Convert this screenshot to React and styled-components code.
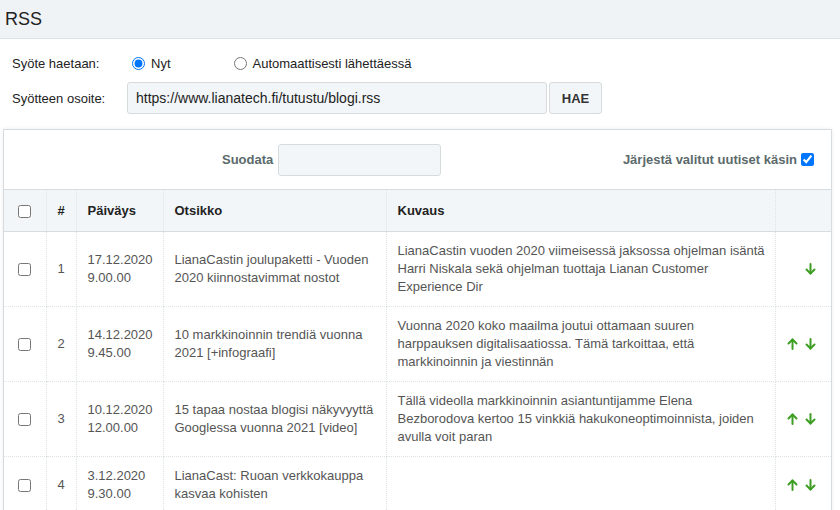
import React, { useState } from "react";
import styled, { createGlobalStyle } from "styled-components";

const GlobalStyle = createGlobalStyle`
  html, body {
    margin: 0;
    padding: 0;
    background: #fff;
    font-family: "Liberation Sans", Arial, sans-serif;
    color: #222;
  }
  * { box-sizing: border-box; }
`;

const items = [
  {
    id: 1,
    date: "17.12.2020",
    time: "9.00.00",
    title: "LianaCastin joulupaketti - Vuoden 2020 kiinnostavimmat nostot",
    desc: "LianaCastin vuoden 2020 viimeisessä jaksossa ohjelman isäntä Harri Niskala sekä ohjelman tuottaja Lianan Customer Experience Dir",
  },
  {
    id: 2,
    date: "14.12.2020",
    time: "9.45.00",
    title: "10 markkinoinnin trendiä vuonna 2021 [+infograafi]",
    desc: "Vuonna 2020 koko maailma joutui ottamaan suuren harppauksen digitalisaatiossa. Tämä tarkoittaa, että markkinoinnin ja viestinnän",
  },
  {
    id: 3,
    date: "10.12.2020",
    time: "12.00.00",
    title: "15 tapaa nostaa blogisi näkyvyyttä Googlessa vuonna 2021 [video]",
    desc: "Tällä videolla markkinoinnin asiantuntijamme Elena Bezborodova kertoo 15 vinkkiä hakukoneoptimoinnista, joiden avulla voit paran",
  },
  {
    id: 4,
    date: "3.12.2020",
    time: "9.30.00",
    title: "LianaCast: Ruoan verkkokauppa kasvaa kohisten",
    desc: "",
  },
];

const Page = styled.div`
  width: 840px;
  height: 510px;
  overflow: hidden;
`;

const TitleBar = styled.header`
  height: 39px;
  background: #f0f3f5;
  border-bottom: 1px solid #dde2e6;
  padding: 0 5px;
  display: flex;
  align-items: center;
  font-size: 18px;
  color: #222;
`;

const Form = styled.div`
  padding: 11px 12px 0;
  display: grid;
  grid-template-columns: 115px 1fr;
  row-gap: 6px;
  align-items: center;
  font-size: 13px;
`;

const Label = styled.div`
  color: #222;
`;

const RadioGroup = styled.div`
  display: flex;
  align-items: center;
  height: 26px;
`;

const RadioLabel = styled.label`
  display: flex;
  align-items: center;
  margin-right: ${(p) => p.$gap || 0}px;
  input {
    margin: 0 6px 0 5px;
    width: 13px;
    height: 13px;
  }
`;

const UrlRow = styled.div`
  display: flex;
  gap: 2px;
`;

const TextInput = styled.input`
  height: 32px;
  width: ${(p) => p.$w}px;
  background: #f3f6f8;
  border: 1px solid #d6dbde;
  border-radius: 3px;
  padding: 0 8px;
  font-family: inherit;
  font-size: 14px;
  color: #222;
  outline: none;
`;

const Button = styled.button`
  height: 32px;
  width: 53px;
  background: #f3f6f8;
  border: 1px solid #d6dbde;
  border-radius: 3px;
  font-family: inherit;
  font-weight: bold;
  font-size: 13px;
  color: #333;
`;

const Panel = styled.section`
  margin: 15px 8px 0 3px;
  border: 1px solid #d6dcdf;
  border-bottom: none;
  box-shadow: 0 0 4px rgba(0, 0, 0, 0.08);
`;

const FilterBar = styled.div`
  height: 59px;
  display: flex;
  align-items: center;
  padding: 0 17px 0 218px;
  font-size: 13px;
  font-weight: bold;
  color: #5b6a6b;
`;

const FilterField = styled.label`
  display: flex;
  align-items: center;
  gap: 5px;
`;

const SortToggle = styled.label`
  margin-left: auto;
  display: flex;
  align-items: center;
  gap: 4px;
  input {
    margin: 0;
    width: 13px;
    height: 13px;
  }
`;

const Table = styled.table`
  width: 100%;
  border-collapse: collapse;
  table-layout: fixed;
  font-size: 13px;
`;

const Th = styled.th`
  background: #f3f6f9;
  text-align: ${(p) => p.$align || "left"};
  font-weight: bold;
  color: #222;
  height: 42px;
  padding: 0 11px;
  border-top: 1px solid #d6dcdf;
  border-bottom: 1px solid #d6dcdf;
  border-right: 1px dotted #dde2e5;
  &:last-child { border-right: none; }
`;

const Td = styled.td`
  color: #555;
  line-height: 18px;
  padding: 10px ${(p) => (p.$tight ? 9 : 11)}px 10px 11px;
  vertical-align: middle;
  text-align: ${(p) => p.$align || "left"};
  border-bottom: 1px dotted #dde2e5;
  border-right: 1px dotted #dde2e5;
  &:last-child { border-right: none; }
`;

const Check = styled.input`
  margin: 0;
  width: 13px;
  height: 13px;
  vertical-align: middle;
`;

const Arrows = styled.div`
  display: flex;
  justify-content: flex-end;
  gap: 5px;
  padding-right: 3px;
`;

const ArrowBtn = styled.span`
  display: inline-flex;
  width: 13px;
  justify-content: center;
  color: #3c9e22;
`;

function Arrow({ up }) {
  return (
    <ArrowBtn>
      <svg width="11" height="12" viewBox="0 0 11 12" fill="none">
        <g
          stroke="currentColor"
          strokeWidth="2"
          strokeLinecap="round"
          strokeLinejoin="round"
          transform={up ? "" : "rotate(180 5.5 6)"}
        >
          <path d="M5.5 11V1.5" />
          <path d="M1.5 5.5l4-4 4 4" />
        </g>
      </svg>
    </ArrowBtn>
  );
}

export default function App() {
  const [mode, setMode] = useState("now");
  const [manual, setManual] = useState(true);

  return (
    <Page>
      <GlobalStyle />
      <TitleBar>RSS</TitleBar>

      <Form>
        <Label>Syöte haetaan:</Label>
        <RadioGroup>
          <RadioLabel $gap={58}>
            <input
              type="radio"
              name="mode"
              checked={mode === "now"}
              onChange={() => setMode("now")}
            />
            Nyt
          </RadioLabel>
          <RadioLabel>
            <input
              type="radio"
              name="mode"
              checked={mode === "auto"}
              onChange={() => setMode("auto")}
            />
            Automaattisesti lähettäessä
          </RadioLabel>
        </RadioGroup>

        <Label>Syötteen osoite:</Label>
        <UrlRow>
          <TextInput $w={420} defaultValue="https://www.lianatech.fi/tutustu/blogi.rss" />
          <Button>HAE</Button>
        </UrlRow>
      </Form>

      <Panel>
        <FilterBar>
          <FilterField>
            Suodata
            <TextInput $w={163} />
          </FilterField>
          <SortToggle>
            Järjestä valitut uutiset käsin
            <input type="checkbox" checked={manual} onChange={() => setManual(!manual)} />
          </SortToggle>
        </FilterBar>

        <Table>
          <colgroup>
            <col style={{ width: 42 }} />
            <col style={{ width: 30 }} />
            <col style={{ width: 87 }} />
            <col style={{ width: 223 }} />
            <col style={{ width: 389 }} />
            <col />
          </colgroup>
          <thead>
            <tr>
              <Th $align="center"><Check type="checkbox" /></Th>
              <Th $align="center">#</Th>
              <Th>Päiväys</Th>
              <Th>Otsikko</Th>
              <Th>Kuvaus</Th>
              <Th />
            </tr>
          </thead>
          <tbody>
            {items.map((item, i) => (
              <tr key={item.id}>
                <Td $align="center"><Check type="checkbox" /></Td>
                <Td $align="center">{item.id}</Td>
                <Td>
                  {item.date}
                  <br />
                  {item.time}
                </Td>
                <Td>{item.title}</Td>
                <Td $tight>{item.desc}</Td>
                <Td>
                  <Arrows>
                    {i > 0 && <Arrow up />}
                    <Arrow />
                  </Arrows>
                </Td>
              </tr>
            ))}
          </tbody>
        </Table>
      </Panel>
    </Page>
  );
}
